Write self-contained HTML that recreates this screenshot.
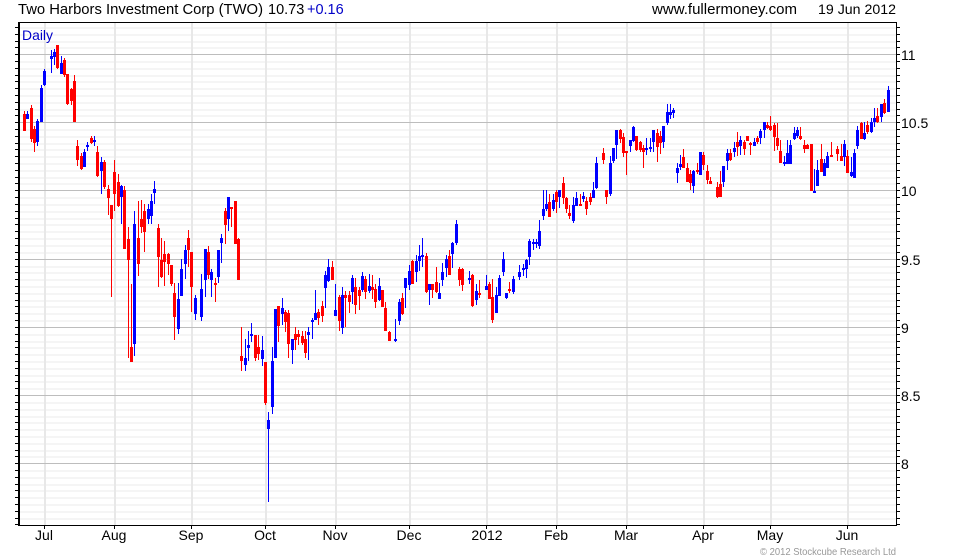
<!DOCTYPE html>
<html>
<head>
<meta charset="utf-8">
<style>
html,body{margin:0;padding:0;background:#fff;width:980px;height:560px;overflow:hidden}
svg{display:block;position:absolute;left:0;top:0}
text{font-family:"Liberation Sans",Arial,sans-serif;fill:#000}
</style>
</head>
<body>
<svg width="980" height="560" viewBox="0 0 980 560" xmlns="http://www.w3.org/2000/svg">
<rect width="980" height="560" fill="#fff"/>
<g shape-rendering="crispEdges" fill="none">
<!-- minor grid -->
<path stroke="#f5f5f5" stroke-width="2" d="M19 28H896M19 35H896M19 42H896M19 48H896M19 62H896M19 69H896M19 76H896M19 82H896M19 89H896M19 96H896M19 103H896M19 110H896M19 116H896M19 130H896M19 137H896M19 144H896M19 150H896M19 157H896M19 164H896M19 171H896M19 178H896M19 184H896M19 198H896M19 205H896M19 212H896M19 219H896M19 225H896M19 232H896M19 239H896M19 246H896M19 253H896M19 267H896M19 273H896M19 280H896M19 287H896M19 294H896M19 301H896M19 307H896M19 314H896M19 321H896M19 335H896M19 342H896M19 348H896M19 355H896M19 362H896M19 369H896M19 376H896M19 382H896M19 389H896M19 403H896M19 410H896M19 417H896M19 423H896M19 430H896M19 437H896M19 444H896M19 451H896M19 457H896M19 471H896M19 478H896M19 485H896M19 491H896M19 498H896M19 505H896M19 512H896M19 519H896"/>
<!-- vertical grid -->
<path stroke="#e8e8e8" stroke-width="2" d="M45 23V525M115 23V525M192 23V525M266 23V525M336 23V525M410 23V525M487 23V525M557 23V525M627 23V525M704 23V525M771 23V525M848 23V525"/>
<!-- major grid -->
<path stroke="#bdbdbd" stroke-width="1" d="M19 54.5H896M19 122.5H896M19 190.5H896M19 259.5H896M19 327.5H896M19 395.5H896M19 463.5H896"/>

<!-- red wicks -->
<path stroke="#ff0000" stroke-width="1" d="M24.5 111V131M31.5 105V142M34.5 126V152M57.5 45V69M64.5 58V77M67.5 74V105M71.5 88V105M74.5 75V122M77.5 140V166M81.5 153V170M91.5 136V144M97.5 146V177M104.5 160V189M108.5 185V215M111.5 205V297M114.5 160V211M118.5 174V207M124.5 186V249M128.5 227V358M131.5 284V362M138.5 201V276M141.5 200V233M144.5 204V252M158.5 224V287M161.5 238V278M164.5 241V286M168.5 253V275M171.5 265V286M174.5 283V340M188.5 230V267M191.5 252V312M208.5 246V279M215.5 278V302M225.5 208V244M231.5 207V227M235.5 201V244M238.5 238V280M241.5 327V371M255.5 335V361M258.5 335V360M265.5 362V405M278.5 306V342M285.5 310V332M288.5 310V358M295.5 327V350M298.5 330V345M302.5 331V345M305.5 331V358M318.5 309V325M322.5 301V322M332.5 261V280M339.5 295V331M345.5 291V327M349.5 291V313M355.5 278V314M359.5 287V310M365.5 276V299M372.5 275V299M375.5 284V308M382.5 290V307M385.5 302V331M389.5 331V341M402.5 293V315M412.5 260V284M426.5 253V293M432.5 284V298M436.5 267V293M449.5 250V275M459.5 267V286M462.5 268V291M472.5 274V307M479.5 280V298M489.5 282V299M492.5 279V323M509.5 282V293M549.5 194V217M556.5 190V213M563.5 177V204M566.5 197V213M569.5 205V219M580.5 194V206M586.5 197V215M590.5 193V205M603.5 148V164M606.5 190V204M620.5 129V143M623.5 133V157M626.5 151V175M636.5 136V151M640.5 141V152M643.5 145V168M657.5 129V162M660.5 131V154M683.5 149V168M687.5 163V182M690.5 170V190M697.5 163V174M703.5 152V170M707.5 165V184M710.5 177V184M717.5 182V198M720.5 171V197M730.5 149V161M737.5 132V156M744.5 140V155M747.5 136V141M750.5 142V155M757.5 136V144M767.5 122V129M770.5 116V131M774.5 123V151M777.5 123V150M780.5 140V163M800.5 127V140M804.5 140V153M807.5 144V149M811.5 144V191M821.5 144V172M831.5 142V157M837.5 146V161M841.5 144V161M847.5 150V173M861.5 122V139M867.5 121V134M877.5 108V123M884.5 99V114"/>
<!-- blue wicks -->
<path stroke="#0000ff" stroke-width="1" d="M27.5 111V119M37.5 119V146M41.5 85V122M44.5 69V86M51.5 50V73M54.5 49V65M61.5 56V74M84.5 149V167M87.5 142V151M94.5 136V146M101.5 157V194M121.5 185V224M134.5 211V356M148.5 204V224M151.5 194V224M154.5 181V204M178.5 283V334M181.5 259V296M185.5 245V279M195.5 295V320M201.5 274V321M205.5 249V297M211.5 269V297M218.5 250V283M221.5 234V263M228.5 197V231M245.5 339V371M248.5 331V361M251.5 323V342M262.5 336V366M268.5 412V502M272.5 347V414M275.5 309V358M282.5 298V325M292.5 339V364M308.5 327V360M312.5 318V339M315.5 290V319M325.5 271V308M328.5 259V282M335.5 284V316M342.5 287V334M352.5 275V304M362.5 272V292M369.5 274V293M379.5 278V301M395.5 319V342M399.5 299V325M405.5 278V308M409.5 265V290M416.5 255V282M419.5 245V271M422.5 238V267M429.5 284V305M439.5 283V299M442.5 263V286M446.5 255V277M452.5 242V268M456.5 220V245M469.5 271V284M476.5 284V305M486.5 275V290M496.5 287V313M499.5 275V296M503.5 252V276M506.5 293V299M513.5 276V294M519.5 265V280M523.5 264V276M526.5 259V278M529.5 239V265M533.5 239V250M536.5 239V248M539.5 220V249M543.5 190V220M546.5 190V211M553.5 194V211M559.5 190V208M573.5 197V223M576.5 192V206M583.5 192V202M593.5 182V198M596.5 157V189M610.5 156V196M613.5 148V163M616.5 130V159M630.5 140V152M633.5 126V142M646.5 138V155M650.5 138V152M653.5 130V152M663.5 126V148M667.5 104V125M670.5 104V119M673.5 108V118M677.5 163V183M680.5 155V170M693.5 170V193M700.5 152V175M723.5 166V187M727.5 149V170M734.5 142V157M740.5 136V155M754.5 138V146M760.5 129V144M764.5 122V138M784.5 156V166M787.5 140V164M790.5 140V164M794.5 127V140M797.5 127V138M814.5 169V193M817.5 160V186M824.5 159V176M827.5 152V168M844.5 140V166M851.5 157V177M854.5 149V178M857.5 126V149M864.5 122V140M871.5 118V133M874.5 108V127M881.5 104V122M888.5 86V112"/>
<!-- red bodies -->
<path stroke="#ff0000" stroke-width="3" d="M24.5 114V131M31.5 108V139M34.5 129V143M57.5 45V68M64.5 60V75M67.5 74V104M71.5 89V101M74.5 81V122M77.5 146V160M81.5 156V169M91.5 138V143M97.5 152V176M104.5 162V187M108.5 189V198M111.5 205V219M114.5 172V194M118.5 182V206M124.5 190V249M128.5 239V260M131.5 347V362M138.5 238V264M141.5 219V227M144.5 211V232M158.5 228V257M161.5 260V277M164.5 254V262M168.5 254V264M171.5 265V284M174.5 293V317M188.5 238V250M191.5 252V287M208.5 252V275M215.5 283V285M225.5 211V225M231.5 207V209M235.5 201V244M238.5 239V280M241.5 356V361M255.5 335V358M258.5 347V354M265.5 362V403M278.5 306V326M285.5 312V322M288.5 313V344M295.5 334V340M298.5 334V337M302.5 336V343M305.5 339V353M318.5 312V318M322.5 306V316M332.5 267V280M339.5 297V321M345.5 295V298M349.5 295V302M355.5 287V305M359.5 290V296M365.5 279V292M372.5 287V290M375.5 289V302M382.5 290V307M385.5 308V331M389.5 332V341M402.5 298V314M412.5 261V284M426.5 256V292M432.5 284V290M436.5 282V292M449.5 256V275M459.5 269V280M462.5 269V285M472.5 275V306M479.5 293V295M489.5 284V299M492.5 297V320M509.5 289V291M549.5 202V217M556.5 192V202M563.5 183V198M566.5 198V209M569.5 213V216M580.5 204V206M586.5 201V209M590.5 197V202M603.5 153V160M606.5 190V197M620.5 130V139M623.5 137V153M626.5 151V153M636.5 136V150M640.5 142V150M643.5 148V152M657.5 133V147M660.5 136V143M683.5 157V168M687.5 168V182M690.5 174V183M697.5 170V172M703.5 155V165M707.5 171V180M710.5 181V184M717.5 187V197M720.5 184V197M730.5 153V160M737.5 142V147M744.5 142V149M747.5 136V141M750.5 143V145M757.5 138V142M767.5 125V128M770.5 126V130M774.5 125V137M777.5 138V146M780.5 151V163M800.5 136V139M804.5 145V149M807.5 145V149M811.5 144V191M821.5 159V172M831.5 155V157M837.5 149V154M841.5 156V161M847.5 156V173M861.5 123V139M867.5 125V132M877.5 116V122M884.5 103V113"/>
<!-- blue bodies -->
<path stroke="#0000ff" stroke-width="3" d="M27.5 114V119M37.5 121V142M41.5 88V122M44.5 71V85M51.5 56V59M54.5 52V57M61.5 63V74M84.5 152V167M87.5 145V147M94.5 140V142M101.5 162V171M121.5 186V197M134.5 224V344M148.5 209V219M151.5 201V216M154.5 189V193M178.5 299V329M181.5 269V296M185.5 250V264M195.5 298V314M201.5 289V317M205.5 249V280M211.5 272V280M218.5 250V277M221.5 238V243M228.5 197V219M245.5 358V365M248.5 345V348M251.5 334V336M262.5 350V359M268.5 420V429M272.5 361V407M275.5 309V358M282.5 308V314M292.5 339V350M308.5 332V335M312.5 320V322M315.5 313V320M325.5 275V288M328.5 267V281M335.5 310V316M342.5 295V328M352.5 278V292M362.5 276V290M369.5 286V291M379.5 286V300M395.5 339V341M399.5 302V321M405.5 278V288M409.5 271V285M416.5 261V272M419.5 256V261M422.5 255V257M429.5 284V290M439.5 293V299M442.5 272V280M446.5 259V268M452.5 243V254M456.5 224V243M469.5 278V280M476.5 291V300M486.5 286V290M496.5 295V313M499.5 278V296M503.5 259V272M506.5 293V298M513.5 279V292M519.5 272V277M523.5 268V270M526.5 260V269M529.5 241V257M533.5 242V244M536.5 242V244M539.5 231V246M543.5 209V216M546.5 204V209M553.5 200V209M559.5 190V197M573.5 205V221M576.5 198V206M583.5 196V199M593.5 190V198M596.5 163V188M610.5 163V194M613.5 148V161M616.5 130V145M630.5 140V146M633.5 127V141M646.5 148V150M650.5 147V149M653.5 130V142M663.5 126V142M667.5 112V123M670.5 112V115M673.5 110V113M677.5 168V173M680.5 164V167M693.5 171V186M700.5 152V175M723.5 166V182M727.5 153V161M734.5 148V152M740.5 140V146M754.5 142V146M760.5 131V138M764.5 122V130M784.5 162V164M787.5 153V164M790.5 145V164M794.5 133V139M797.5 130V136M814.5 191V193M817.5 170V186M824.5 163V176M827.5 156V168M844.5 144V157M851.5 172V176M854.5 153V178M857.5 130V146M864.5 133V139M871.5 122V132M874.5 118V122M881.5 104V117M888.5 90V112"/>

<!-- ticks -->
<path stroke="#000" stroke-width="1" d="M15 27.5H18M15 34.5H18M15 41.5H18M15 47.5H18M15 54.5H18M15 61.5H18M15 68.5H18M15 75.5H18M15 81.5H18M15 88.5H18M15 95.5H18M15 102.5H18M15 109.5H18M15 115.5H18M15 122.5H18M15 129.5H18M15 136.5H18M15 143.5H18M15 149.5H18M15 156.5H18M15 163.5H18M15 170.5H18M15 177.5H18M15 183.5H18M15 190.5H18M15 197.5H18M15 204.5H18M15 211.5H18M15 218.5H18M15 224.5H18M15 231.5H18M15 238.5H18M15 245.5H18M15 252.5H18M15 259.5H18M15 266.5H18M15 272.5H18M15 279.5H18M15 286.5H18M15 293.5H18M15 300.5H18M15 306.5H18M15 313.5H18M15 320.5H18M15 327.5H18M15 334.5H18M15 341.5H18M15 347.5H18M15 354.5H18M15 361.5H18M15 368.5H18M15 375.5H18M15 381.5H18M15 388.5H18M15 395.5H18M15 402.5H18M15 409.5H18M15 416.5H18M15 422.5H18M15 429.5H18M15 436.5H18M15 443.5H18M15 450.5H18M15 456.5H18M15 463.5H18M15 470.5H18M15 477.5H18M15 484.5H18M15 490.5H18M15 497.5H18M15 504.5H18M15 511.5H18M15 518.5H18M15 524.5H18"/>
<path stroke="#000" stroke-width="1" d="M897 27.5H900M897 34.5H900M897 41.5H900M897 47.5H900M897 54.5H900M897 61.5H900M897 68.5H900M897 75.5H900M897 81.5H900M897 88.5H900M897 95.5H900M897 102.5H900M897 109.5H900M897 115.5H900M897 122.5H900M897 129.5H900M897 136.5H900M897 143.5H900M897 149.5H900M897 156.5H900M897 163.5H900M897 170.5H900M897 177.5H900M897 183.5H900M897 190.5H900M897 197.5H900M897 204.5H900M897 211.5H900M897 218.5H900M897 224.5H900M897 231.5H900M897 238.5H900M897 245.5H900M897 252.5H900M897 259.5H900M897 266.5H900M897 272.5H900M897 279.5H900M897 286.5H900M897 293.5H900M897 300.5H900M897 306.5H900M897 313.5H900M897 320.5H900M897 327.5H900M897 334.5H900M897 341.5H900M897 347.5H900M897 354.5H900M897 361.5H900M897 368.5H900M897 375.5H900M897 381.5H900M897 388.5H900M897 395.5H900M897 402.5H900M897 409.5H900M897 416.5H900M897 422.5H900M897 429.5H900M897 436.5H900M897 443.5H900M897 450.5H900M897 456.5H900M897 463.5H900M897 470.5H900M897 477.5H900M897 484.5H900M897 490.5H900M897 497.5H900M897 504.5H900M897 511.5H900M897 518.5H900M897 524.5H900"/>
<path stroke="#000" stroke-width="1" d="M44.5 525V529M114.5 525V529M191.5 525V529M265.5 525V529M335.5 525V529M409.5 525V529M486.5 525V529M556.5 525V529M626.5 525V529M703.5 525V529M770.5 525V529M847.5 525V529"/>
<!-- frame -->
<path stroke="#000" stroke-width="1" d="M18 22.5H897M896.5 22V526M18 525.5H897"/>
<path stroke="#000" stroke-width="2" d="M19 22V526"/>
</g>

<text x="18" y="14" font-size="14.7" textLength="245" lengthAdjust="spacingAndGlyphs">Two Harbors Investment Corp (TWO)</text>
<text x="268" y="14" font-size="14.5">10.73</text>
<text x="307" y="14" font-size="14.5" style="fill:#0000c8">+0.16</text>
<text x="652" y="14" font-size="15" textLength="145" lengthAdjust="spacingAndGlyphs">www.fullermoney.com</text>
<text x="818" y="14" font-size="14" textLength="78" lengthAdjust="spacingAndGlyphs">19 Jun 2012</text>
<text x="22" y="40" font-size="14" textLength="31" lengthAdjust="spacingAndGlyphs" style="fill:#0000c8">Daily</text>

<g font-size="14">
<text x="901" y="60">11</text>
<text x="901" y="128">10.5</text>
<text x="901" y="196">10</text>
<text x="901" y="265">9.5</text>
<text x="901" y="333">9</text>
<text x="901" y="401">8.5</text>
<text x="901" y="469">8</text>
</g>
<g font-size="14" text-anchor="middle">
<text x="44" y="540">Jul</text>
<text x="114" y="540">Aug</text>
<text x="191" y="540">Sep</text>
<text x="265" y="540">Oct</text>
<text x="335" y="540">Nov</text>
<text x="409" y="540">Dec</text>
<text x="487" y="540">2012</text>
<text x="556" y="540">Feb</text>
<text x="626" y="540">Mar</text>
<text x="703" y="540">Apr</text>
<text x="770" y="540">May</text>
<text x="847" y="540">Jun</text>
</g>
<text x="760" y="555" font-size="10" textLength="136" lengthAdjust="spacingAndGlyphs" style="fill:#999999">© 2012 Stockcube Research Ltd</text>
</svg>
</body>
</html>
